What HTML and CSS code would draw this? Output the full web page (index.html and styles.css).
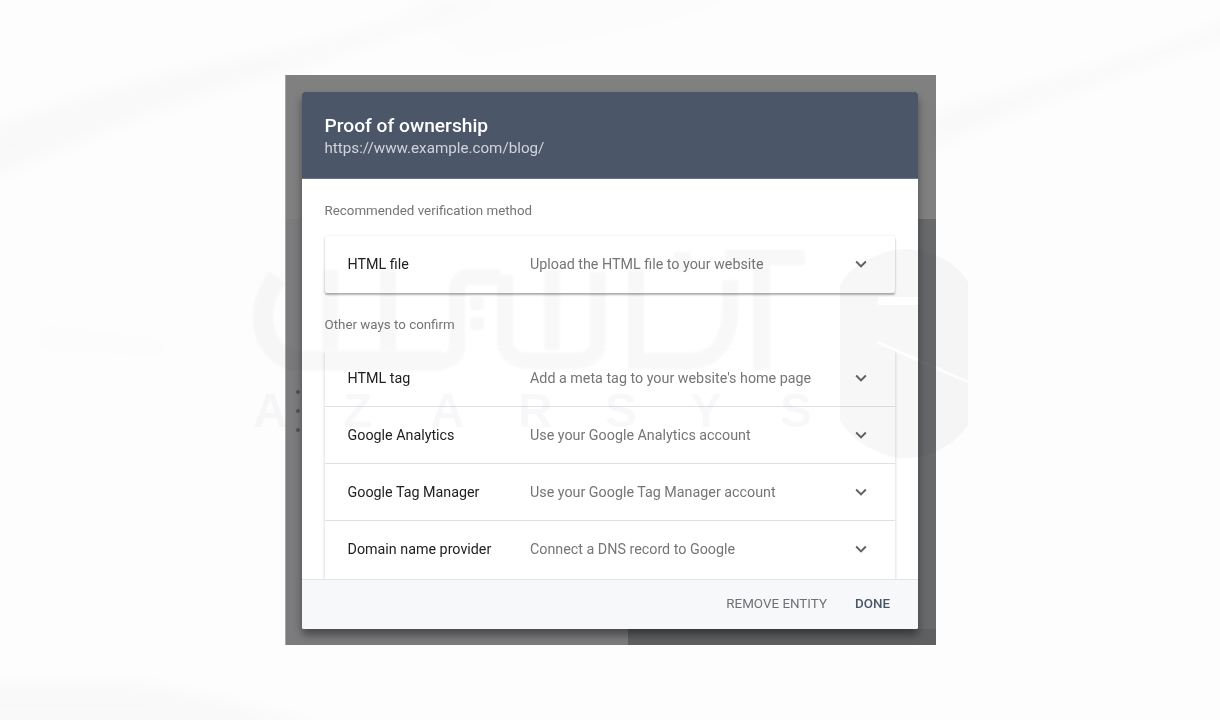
FILE: index.html
```html
<!DOCTYPE html>
<html lang="en">
<head>
<meta charset="utf-8">
<title>Proof of ownership</title>
<link rel="stylesheet" href="styles.css">
</head>
<body>
<main class="stage">
  <span class="dot dot-1"></span>
  <span class="dot dot-2"></span>
  <span class="dot dot-3"></span>
  <section class="dialog">
    <header class="dialog-head">
      <h1 class="dialog-title">Proof of ownership</h1>
      <p class="dialog-url">https://www.example.com/blog/</p>
    </header>
    <div class="dialog-body">
      <h2 class="group-label">Recommended verification method</h2>
      <div class="card card-single">
        <div class="row">
          <span class="row-name">HTML file</span>
          <span class="row-desc">Upload the HTML file to your website</span>
          <svg class="chev" viewBox="0 0 24 24"><path d="M7.41 8.59 12 13.17l4.59-4.58L18 10l-6 6-6-6z"/></svg>
        </div>
      </div>
      <h2 class="group-label group-label-next">Other ways to confirm</h2>
      <div class="card card-list">
        <div class="row">
          <span class="row-name">HTML tag</span>
          <span class="row-desc">Add a meta tag to your website's home page</span>
          <svg class="chev" viewBox="0 0 24 24"><path d="M7.41 8.59 12 13.17l4.59-4.58L18 10l-6 6-6-6z"/></svg>
        </div>
        <div class="row">
          <span class="row-name">Google Analytics</span>
          <span class="row-desc">Use your Google Analytics account</span>
          <svg class="chev" viewBox="0 0 24 24"><path d="M7.41 8.59 12 13.17l4.59-4.58L18 10l-6 6-6-6z"/></svg>
        </div>
        <div class="row">
          <span class="row-name">Google Tag Manager</span>
          <span class="row-desc">Use your Google Tag Manager account</span>
          <svg class="chev" viewBox="0 0 24 24"><path d="M7.41 8.59 12 13.17l4.59-4.58L18 10l-6 6-6-6z"/></svg>
        </div>
        <div class="row">
          <span class="row-name">Domain name provider</span>
          <span class="row-desc">Connect a DNS record to Google</span>
          <svg class="chev" viewBox="0 0 24 24"><path d="M7.41 8.59 12 13.17l4.59-4.58L18 10l-6 6-6-6z"/></svg>
        </div>
      </div>
    </div>
    <footer class="dialog-foot">
      <button class="btn" type="button">REMOVE ENTITY</button>
      <button class="btn btn-done" type="button">DONE</button>
    </footer>
  </section>
</main>
<svg class="watermark" viewBox="0 0 1220 720" aria-hidden="true">
  <defs>
    <filter id="soft" x="-10%" y="-50%" width="120%" height="200%"><feGaussianBlur stdDeviation="9"/></filter>
    <filter id="faint" x="-5%" y="-5%" width="110%" height="110%"><feGaussianBlur stdDeviation="1"/></filter>
    <mask id="shield-cuts" maskUnits="userSpaceOnUse" x="830" y="240" width="150" height="220">
      <rect x="830" y="240" width="150" height="220" fill="#fff"/>
      <rect x="878" y="297" width="42" height="8" fill="#000"/>
      <path d="M877 342 L968 382" stroke="#000" stroke-width="3" fill="none"/>
    </mask>
  </defs>
  <g class="streaks" filter="url(#soft)">
    <path d="M-30 135 C70 95 170 70 290 48 C350 35 420 15 480 -10 L500 -10 C420 30 340 55 290 72 C190 95 90 135 -30 190Z"/>
    <path d="M930 112 C1030 85 1130 60 1250 12 L1250 30 C1130 72 1030 105 930 150Z"/>
    <path d="M-30 682 L140 682 C200 695 260 705 330 730 L-30 730Z"/>
    <path d="M400 -10 H760 C700 20 600 40 470 60 C440 40 420 20 400 -10Z" class="streak-light"/>
    <path d="M30 322 L170 338 L172 358 L40 352Z" class="streak-light"/>
  </g>
  <g class="logo" filter="url(#faint)">
    <path class="logo-line logo-arc" d="M277 277 C258 305 258 332 277 352 C284 359 292 361 300 361 H443"/>
    <path class="logo-line" d="M330 270 V350"/>
    <path class="logo-line" d="M388 270 V350"/>
    <path class="logo-line" d="M443 361 C452 361 457 354 457 345 V290 C457 282 462 277 470 277 H500"/>
    <rect x="470" y="297" width="14" height="13" rx="3"/>
    <rect x="470" y="317" width="14" height="13" rx="3"/>
    <path class="logo-line" d="M505 275 V340 C505 354 515 361 530 361 H575 C590 361 598 354 598 340 V272"/>
    <path class="logo-line" d="M552 270 V350"/>
    <path class="logo-line" d="M636 270 V361 H690 C715 361 730 340 730 310 V280"/>
    <rect x="725" y="250" width="80" height="15"/>
    <rect x="753" y="265" width="17" height="105"/>
    <path class="logo-line" d="M682 252 V272"/>
  </g>
  <path class="shield" mask="url(#shield-cuts)" d="M878 255 C895 247 915 247 935 255 C950 261 961 270 968 282 V425 C960 437 950 445 935 452 C915 460 895 460 878 452 C862 445 848 435 840 420 V285 C848 270 862 261 878 255Z"/>
  <text class="brand" x="253 343 430 518 605 690 780" y="427">AZARSYS</text>
</svg>
</body>
</html>
```

FILE: styles.css
```css
* { box-sizing: border-box; }

html, body {
  margin: 0;
  height: 720px;
  overflow: hidden;
  background: #fdfdfd;
  font-family: Roboto, "Liberation Sans", sans-serif;
}

.stage {
  position: relative;
  width: 651px;
  height: 570px;
  margin: 75px 0 0 285px;
  padding: 17px 18px 16px 17px;
  background:
    linear-gradient(#808080, #808080) top / 100% 144px no-repeat,
    linear-gradient(#5f6062, #5f6062) right bottom / 308px 16px no-repeat,
    linear-gradient(90deg, #7c7c7e 0 343px, #67696a 343px);
  box-shadow: inset 1px 0 0 #a6a6a6;
  filter: blur(.4px);
}

.dot {
  position: absolute;
  left: 11px;
  width: 4px;
  height: 4px;
  border-radius: 50%;
  background: #4c4c4c;
}
.dot-1 { top: 315px; }
.dot-2 { top: 334px; }
.dot-3 { top: 353px; }

.dialog {
  display: flex;
  flex-direction: column;
  height: 537px;
  border-radius: 2px;
  background: #fff;
  box-shadow: 0 6px 8px rgba(0, 0, 0, .42);
}

.dialog-head {
  flex: none;
  height: 87px;
  padding: 21.5px 23px 0 22.5px;
  border-radius: 2px 2px 0 0;
  background: #4b5768;
  box-shadow: inset 0 -1px 0 #6a7482;
}

.dialog-title {
  margin: 0;
  font-size: 19.2px;
  line-height: 24px;
  font-weight: 500;
  color: #fff;
}

.dialog-url {
  margin: .5px 0 0;
  font-size: 15.2px;
  line-height: 20px;
  color: #d0d4da;
}

.dialog-body {
  flex: 1;
  min-height: 0;
  overflow: hidden;
  padding: 21.5px 23px 0 22.5px;
  background: #fff;
}

.group-label {
  margin: 0 0 15.5px;
  font-size: 13.35px;
  line-height: 20px;
  font-weight: 400;
  color: #757575;
}
.group-label-next { margin-top: 21.5px; }

.card {
  background: #fff;
  border-radius: 2px;
}
.card-single {
  box-shadow: 0 2px 2px rgba(0, 0, 0, .3), 0 0 3px rgba(0, 0, 0, .08);
}
.card-list {
  padding-bottom: 13px;
  box-shadow: 1px 2px 3px rgba(0, 0, 0, .1), -1px 2px 3px rgba(0, 0, 0, .1);
}

.row {
  display: flex;
  align-items: center;
  height: 57px;
  padding: 0 23px;
  border-bottom: 1px solid #dfe0e3;
  font-size: 14.3px;
  line-height: 20px;
}
.card-single .row,
.card-list .row:last-child { border-bottom-color: transparent; }

.row-name {
  flex: none;
  width: 182.5px;
  color: #212121;
}

.row-desc {
  flex: 1;
  color: #757575;
}

.chev {
  flex: none;
  width: 22px;
  height: 22px;
  fill: #5f6368;
}

.dialog-foot {
  flex: none;
  display: flex;
  align-items: center;
  justify-content: flex-end;
  gap: 28px;
  height: 50px;
  padding: 0 28px 2px 0;
  border-top: 1px solid #e3e4e7;
  border-radius: 0 0 2px 2px;
  background: #f7f8fa;
}

.btn {
  padding: 0;
  border: 0;
  background: none;
  font: 400 13.4px/20px Roboto, "Liberation Sans", sans-serif;
  color: #6f7175;
}
.btn-done {
  font-weight: 500;
  color: #4b5768;
}

.watermark {
  position: absolute;
  left: 0;
  top: 0;
  width: 1220px;
  height: 720px;
  pointer-events: none;
}

.streaks { fill: #000; opacity: .016; }
.streak-light { opacity: .35; }

.logo { fill: #20204a; opacity: .027; }
.logo-line { fill: none; stroke: #20204a; stroke-width: 16; }
.logo-arc { stroke-width: 20; }

.shield { fill: #20204a; opacity: .032; }

.brand {
  font: 700 48px "Liberation Sans", sans-serif;
  fill: #20204a;
  opacity: .022;
}
```
